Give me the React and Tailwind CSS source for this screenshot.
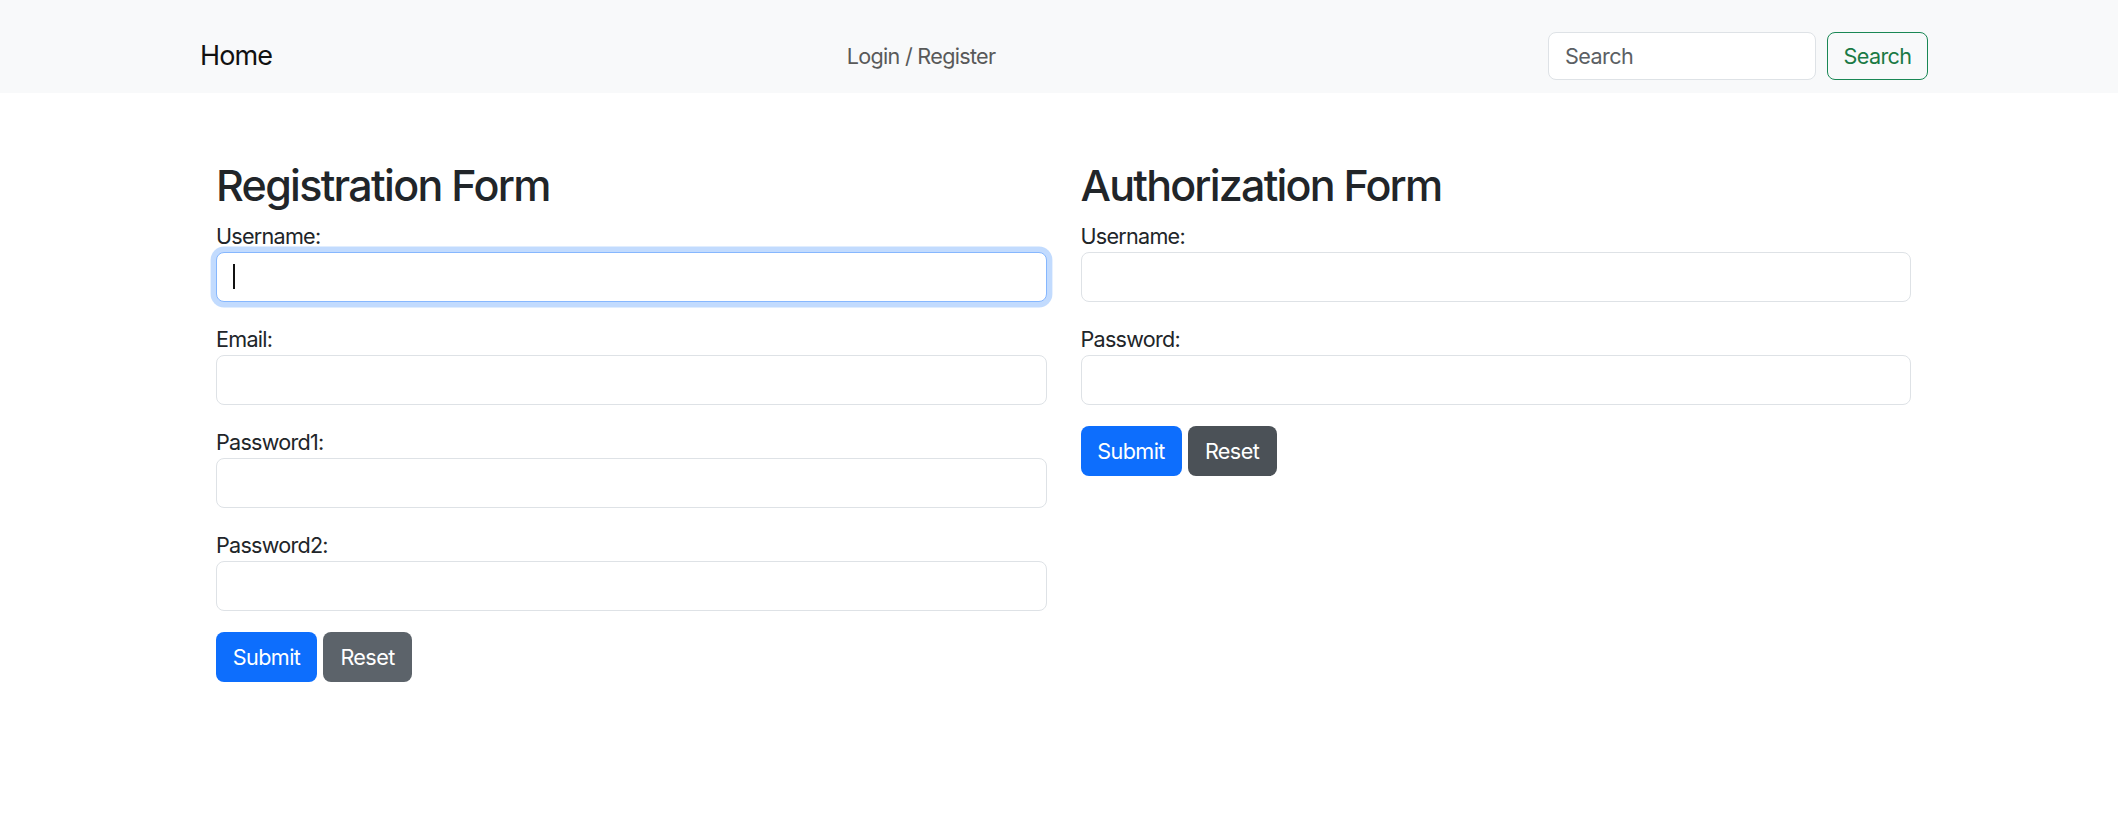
// App.jsx — Registration / Authorization page

const font = { fontFamily: 'Inter, "Liberation Sans", Arial, sans-serif' };

function Field({ label, focused }) {
    return (
        <div className="mb-[21px]">
            <label className="block text-[21.6px] leading-[32px] text-[#212529] tracking-[-0.75px]">{label}</label>
            <div className="relative">
                <input
                    type="text"
                    className={
                        focused
                            ? 'block w-full h-[50px] px-[16px] rounded-[8px] bg-white border border-[#86b7fe] shadow-[0_0_0_5.4px_rgba(13,110,253,0.25)] outline-none'
                            : 'block w-full h-[50px] px-[16px] rounded-[8px] bg-white border border-[#dee2e6] outline-none'
                    }
                />
                {/* caret of the focused field */}
                {focused && <span className="absolute left-[17px] top-[12px] w-[2px] h-[25px] bg-[#111]" />}
            </div>
        </div>
    );
}

function Buttons({ dark }) {
    return (
        <div className="flex gap-[6px]">
            <button className="w-[101px] h-[50px] rounded-[8px] bg-[#0d6efd] text-white text-[21.6px] tracking-[-0.6px]">
                Submit
            </button>
            <button
                className={
                    dark
                        ? 'w-[89px] h-[50px] rounded-[8px] bg-[#4b5157] text-white text-[21.6px] tracking-[-0.6px]'
                        : 'w-[89px] h-[50px] rounded-[8px] bg-[#5c636a] text-white text-[21.6px] tracking-[-0.6px]'
                }
            >
                Reset
            </button>
        </div>
    );
}

export default function App() {
    return (
        <div className="min-h-screen bg-white" style={font}>
            {/* ── Navbar ─────────────────────────────── */}
            <nav className="h-[93px] bg-[#f8f9fa] flex items-center pt-[19px] pl-[200px] pr-[190px]">
                <a className="text-[27px] text-[#111] mr-[22px] tracking-[-0.9px]">Home</a>
                <div className="flex-1 flex justify-center">
                    <a className="text-[21.6px] text-[#595959] tracking-[-0.7px]">Login / Register</a>
                </div>
                <div className="flex gap-[11px]">
                    <input
                        placeholder="Search"
                        className="w-[268px] h-[48px] px-[16px] rounded-[8px] bg-white border border-[#dee2e6] text-[21.6px] placeholder:text-[#5b5f64] outline-none tracking-[-0.6px]"
                    />
                    <button className="w-[101px] h-[48px] rounded-[8px] border border-[#198754] text-[#1a7a45] text-[21.6px] tracking-[-0.6px]">
                        Search
                    </button>
                </div>
            </nav>

            {/* ── Forms ──────────────────────────────── */}
            <main className="ml-[216px] w-[1695px] pt-[66px] grid grid-cols-2 gap-x-[34px]">
                <section>
                    <h2 className="text-[43px] leading-[52px] font-medium text-[#212529] mb-[9px] tracking-[-1.7px]">
                        Registration Form
                    </h2>
                    <Field label="Username:" focused />
                    <Field label="Email:" />
                    <Field label="Password1:" />
                    <Field label="Password2:" />
                    <Buttons />
                </section>
                <section>
                    <h2 className="text-[43px] leading-[52px] font-medium text-[#212529] mb-[9px] tracking-[-1.8px]">
                        Authorization Form
                    </h2>
                    <Field label="Username:" />
                    <Field label="Password:" />
                    <Buttons dark />
                </section>
            </main>
        </div>
    );
}
